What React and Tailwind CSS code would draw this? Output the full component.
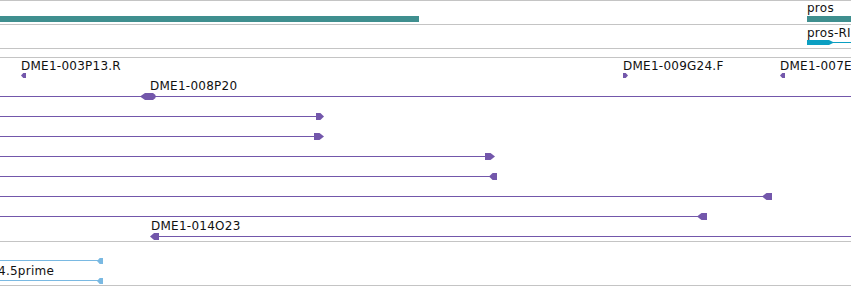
const PURPLE = '#7357ab';
const EST = '#7ab9e2';

function Arrow({ x, y, dir = 'left', w = 8, color = PURPLE, h = 7 }) {
  // small pentagon arrowhead at the end of a feature
  const pts =
    dir === 'left'
      ? `0,${h / 2} ${w * 0.45},0 ${w},0 ${w},${h} ${w * 0.45},${h}`
      : `0,0 ${w * 0.55},0 ${w},${h / 2} ${w * 0.55},${h} 0,${h}`;
  return (
    <svg
      className="absolute"
      style={{ left: x, top: y - h / 2 }}
      width={w}
      height={h}
      viewBox={`0 0 ${w} ${h}`}
    >
      <polygon points={pts} fill={color} />
    </svg>
  );
}

function Line({ x1, x2, y = 18, color = PURPLE }) {
  return (
    <div
      className="absolute h-px"
      style={{ left: x1, width: x2 - x1, top: y, background: color }}
    />
  );
}

function Label({ x, y = 1, children }) {
  return (
    <span
      className="absolute whitespace-nowrap text-[12px] leading-[14px] tracking-[0.25px] text-[#111]"
      style={{ left: x, top: y }}
    >
      {children}
    </span>
  );
}

const clones = [
  { x1: 0, x2: 851, label: 'DME1-008P20', lx: 150, blob: true },
  { x1: 0, x2: 317, head: { x: 316, dir: 'right', w: 8 } },
  { x1: 0, x2: 315, head: { x: 314, dir: 'right', w: 10 } },
  { x1: 0, x2: 486, head: { x: 485, dir: 'right', w: 10 } },
  { x1: 0, x2: 496, head: { x: 489, dir: 'left', w: 8 } },
  { x1: 0, x2: 771, head: { x: 762, dir: 'left', w: 10 } },
  { x1: 0, x2: 706, head: { x: 697, dir: 'left', w: 10 } },
  { x1: 152, x2: 851, head: { x: 150, dir: 'left', w: 9 }, label: 'DME1-014O23', lx: 151 },
];

export default function App() {
  return (
    <div
      className="w-[851px] h-[286px] overflow-hidden bg-white flex flex-col"
      style={{ fontFamily: '"DejaVu Sans", Verdana, sans-serif' }}
    >
      {/* gene track */}
      <div className="relative h-[25px] border-t border-b border-[#c4c4c4] shrink-0">
        <div className="absolute left-0 top-[15px] h-[6px] w-[419px] bg-[#3f8f8f]" />
        <Label x={807} y={0}>pros</Label>
        <div className="absolute left-[807px] top-[15px] h-[6px] w-[44px] bg-[#3f8f8f]" />
      </div>

      {/* transcript track */}
      <div className="relative h-[24px] border-b border-[#c4c4c4] shrink-0">
        <Label x={807} y={1}>pros-RI</Label>
        <svg className="absolute left-[807px] top-[14px]" width="44" height="7" viewBox="0 0 44 7">
          <polygon points="0,1 22,1 26,3 44,3 44,4 26,4 22,6 0,6" fill="#0b9fc2" />
        </svg>
      </div>

      {/* empty track */}
      <div className="h-[9px] border-b border-[#c4c4c4] shrink-0" />

      {/* clone track */}
      <div className="flex flex-col h-[184px] border-b border-[#c4c4c4] shrink-0">
        <div className="relative h-[20px]">
          <Label x={21}>DME1-003P13.R</Label>
          <Arrow x={21} y={17} dir="left" w={5} h={5} />
          <Label x={623}>DME1-009G24.F</Label>
          <Arrow x={623} y={17} dir="right" w={5} h={5} />
          <Label x={780}>DME1-007E</Label>
          <Arrow x={780} y={17} dir="left" w={5} h={5} />
        </div>
        {clones.map((c, i) => (
          <div key={i} className="relative h-[20px]">
            {c.label && <Label x={c.lx}>{c.label}</Label>}
            <Line x1={c.x1} x2={c.x2} />
            {c.head && <Arrow x={c.head.x} y={18.5} dir={c.head.dir} w={c.head.w} />}
            {c.blob && (
              <svg className="absolute left-[140px] top-[15px]" width="16" height="7" viewBox="0 0 16 7">
                <polygon points="0,3.5 5,0 13,0 15.5,2 15.5,5 13,7 5,7" fill={PURPLE} />
              </svg>
            )}
          </div>
        ))}
      </div>

      {/* EST track */}
      <div className="flex flex-col h-[44px] border-b border-[#c4c4c4] shrink-0">
        <div className="relative h-[20px]">
          <Line x1={0} x2={103} color={EST} />
          <Arrow x={97} y={18.5} dir="left" w={6} h={6} color={EST} />
        </div>
        <div className="relative h-[20px]">
          <Label x={-2} y={2}>4.5prime</Label>
          <Line x1={0} x2={103} color={EST} />
          <Arrow x={97} y={18.5} dir="left" w={6} h={6} color={EST} />
        </div>
      </div>
    </div>
  );
}
